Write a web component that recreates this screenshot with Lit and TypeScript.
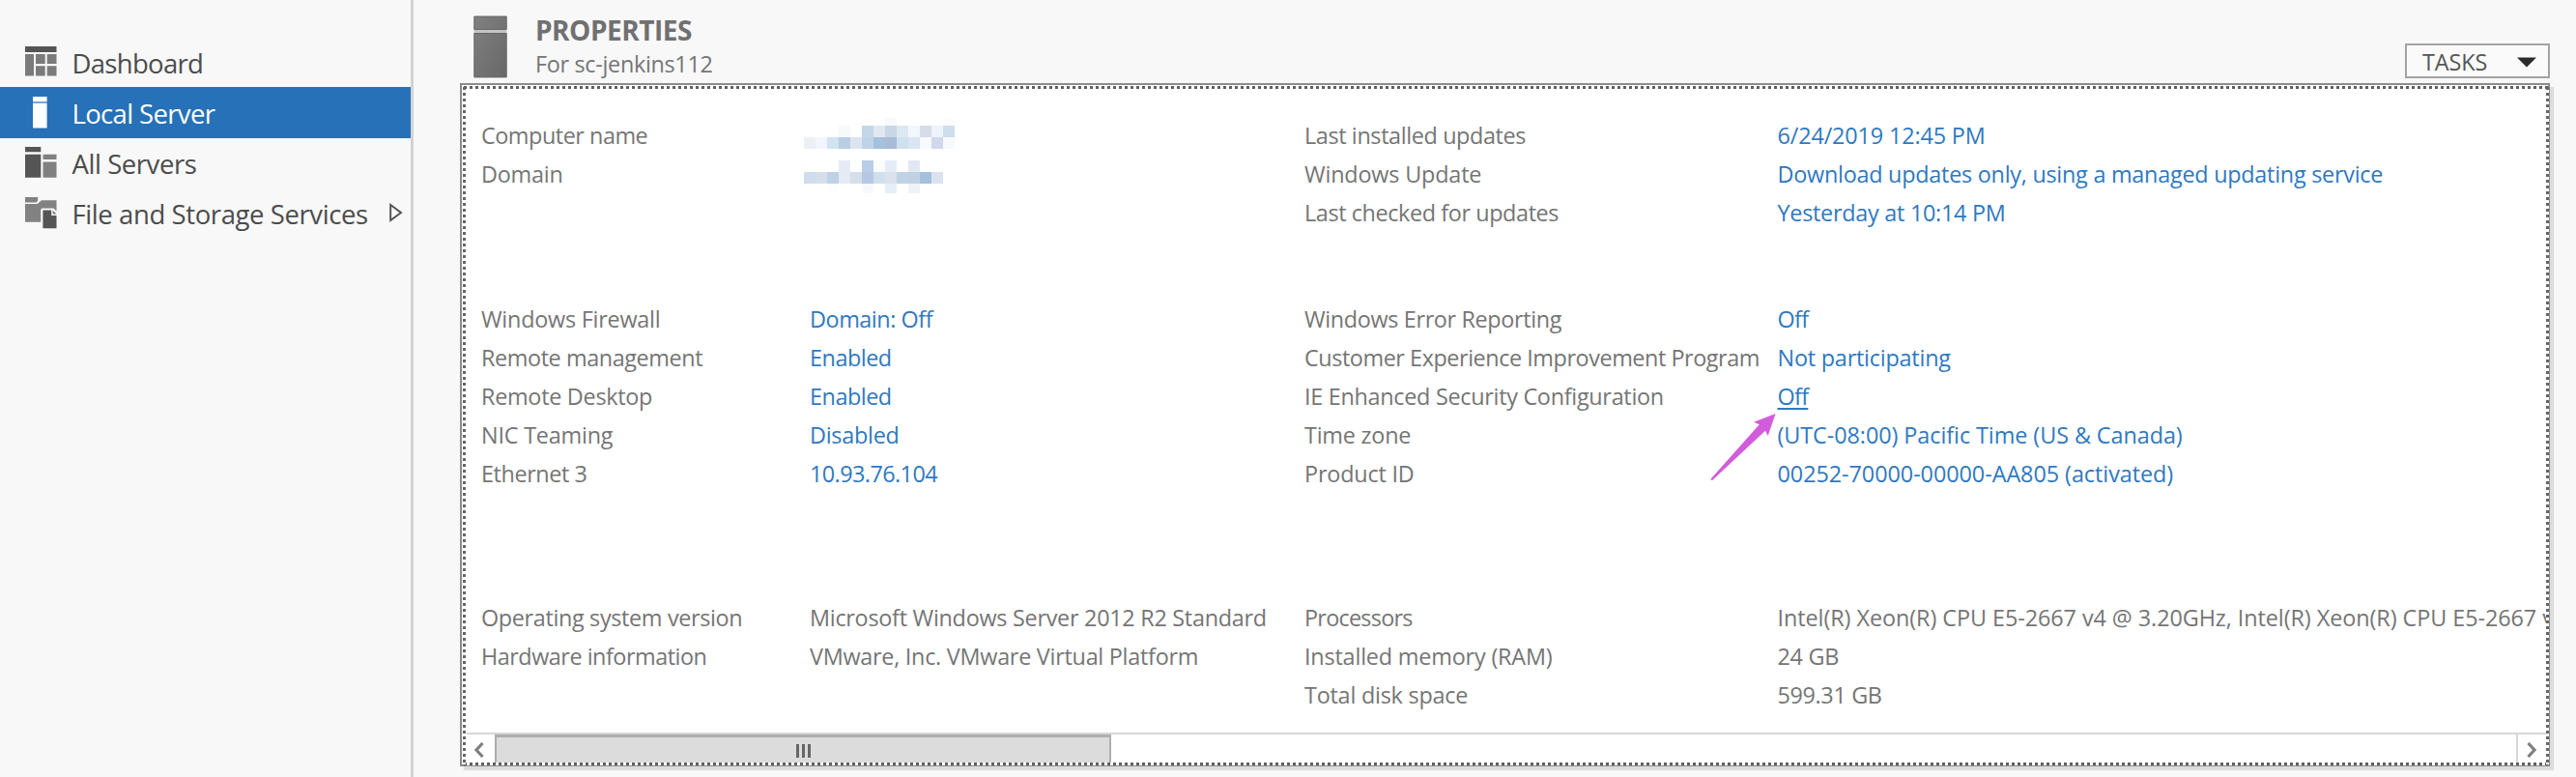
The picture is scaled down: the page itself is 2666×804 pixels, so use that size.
import { LitElement, html, css, svg, nothing } from "lit";
import { customElement, property } from "lit/decorators.js";
import { classMap } from "lit/directives/class-map.js";

/** A single line of text whose tracking is adjusted so it ends at a given width. */
@customElement("fit-text")
class FitText extends LitElement {
  @property() text = "";
  @property({ type: Number }) width = 0;
  static styles = css`
    :host { display: inline-block; white-space: pre; }
  `;
  render() {
    return html`<span>${this.text}</span>`;
  }
  updated() {
    const cs = getComputedStyle(this);
    const ctx = document.createElement("canvas").getContext("2d")!;
    ctx.font = `${cs.fontWeight} ${cs.fontSize} ${cs.fontFamily}`;
    const ink = ctx.measureText(this.text).actualBoundingBoxRight;
    const gap = (this.width - ink) / Math.max(1, this.text.length - 1);
    this.style.letterSpacing = `${gap.toFixed(3)}px`;
  }
}

type Pair = { label: string; lw: number; value?: string; vw?: number; kind?: string; tail?: string };

const left: Pair[][] = [
  [
    { label: "Computer name", lw: 172.8, kind: "masked" },
    { label: "Domain", lw: 84.6, kind: "masked" },
  ],
  [
    { label: "Windows Firewall", lw: 185, value: "Domain: Off", vw: 130, kind: "link" },
    { label: "Remote management", lw: 230.4, value: "Enabled", vw: 85, kind: "link" },
    { label: "Remote Desktop", lw: 178.3, value: "Enabled", vw: 85, kind: "link" },
    { label: "NIC Teaming", lw: 138, value: "Disabled", vw: 92.8, kind: "link" },
    { label: "Ethernet 3", lw: 109.7, value: "10.93.76.104", vw: 133.4, kind: "link" },
  ],
  [
    { label: "Operating system version", lw: 270.5, value: "Microsoft Windows Server 2012 R2 Standard", vw: 473 },
    { label: "Hardware information", lw: 233.8, value: "VMware, Inc. VMware Virtual Platform", vw: 402 },
  ],
];

const right: Pair[][] = [
  [
    { label: "Last installed updates", lw: 230.5, value: "6/24/2019 12:45 PM", vw: 214.5, kind: "link" },
    { label: "Windows Update", lw: 183.5, value: "Download updates only, using a managed updating service", vw: 627, kind: "link" },
    { label: "Last checked for updates", lw: 264.5, value: "Yesterday at 10:14 PM", vw: 235.5, kind: "link" },
  ],
  [
    { label: "Windows Error Reporting", lw: 268, value: "Off", vw: 35, kind: "link" },
    { label: "Customer Experience Improvement Program", lw: 471, value: "Not participating", vw: 181, kind: "link" },
    { label: "IE Enhanced Security Configuration", lw: 372, value: "Off", vw: 35, kind: "link hover" },
    { label: "Time zone", lw: 110.5, value: "(UTC-08:00) Pacific Time (US & Canada)", vw: 419.5, kind: "link" },
    { label: "Product ID", lw: 114, value: "00252-70000-00000-AA805 (activated)", vw: 410, kind: "link" },
  ],
  [
    { label: "Processors", lw: 113.5, value: "Intel(R) Xeon(R) CPU E5-2667 v4 @ 3.20GHz, Intel(R) Xeon(R) CPU E5-2667", vw: 786.5, tail: " v4 @ 3.20GHz" },
    { label: "Installed memory (RAM)", lw: 257, value: "24 GB", vw: 64 },
    { label: "Total disk space", lw: 169.5, value: "599.31 GB", vw: 108.5 },
  ],
];

// Blurred-out value cells: [column, y, height, colour]
const mosaic: [number, number, number, string][] = [
  [5, 0, 8, "#fdfdfd"], [7, 0, 8, "#f7f9fc"], [12, 0, 8, "#fafcfe"],
  [3, 8, 12, "#f8f9fb"], [5, 8, 12, "#c3d7e8"], [6, 8, 12, "#e1e8f2"], [7, 8, 12, "#c9d6e6"], [8, 8, 12, "#dce8f0"],
  [9, 8, 12, "#f2f7fa"], [10, 8, 12, "#d7dcea"], [11, 8, 12, "#eef4fd"], [12, 8, 12, "#cddeed"],
  [0, 20, 12, "#ecf0f5"], [1, 20, 12, "#f0f6fb"], [2, 20, 12, "#d2e3f2"], [3, 20, 12, "#b8cee3"], [4, 20, 12, "#dce4f0"],
  [5, 20, 12, "#bfd3e8"], [6, 20, 12, "#a5c1e0"], [7, 20, 12, "#a8bbd7"], [8, 20, 12, "#cfe0ee"], [9, 20, 12, "#d8e6f2"],
  [10, 20, 12, "#f9fafd"], [11, 20, 12, "#ced9eb"], [12, 20, 12, "#f6faff"],
  [3, 44, 12, "#e4ebf4"], [5, 44, 12, "#bacde6"], [6, 44, 12, "#fafcfe"], [7, 44, 12, "#e4edf6"], [9, 44, 12, "#e2e8f3"],
  [0, 56, 12, "#cfdced"], [1, 56, 12, "#d5dfeb"], [2, 56, 12, "#bfd1e4"], [3, 56, 12, "#e4ebf4"], [4, 56, 12, "#d4dfeb"],
  [5, 56, 12, "#b5c8e3"], [6, 56, 12, "#d0dfed"], [7, 56, 12, "#dbe1ed"], [8, 56, 12, "#bfd3e4"], [9, 56, 12, "#c2d0e3"],
  [10, 56, 12, "#a4c0dc"], [11, 56, 12, "#dbe2ef"],
  [2, 68, 10, "#fcfdff"], [5, 68, 10, "#f7f9fe"], [7, 68, 10, "#e6eff8"], [9, 68, 10, "#eef2f8"],
];

const icons = {
  dashboard: svg`<path fill="#555" d="M0 0h32.5v6H0z"/><path fill="#7b7b7b" d="M0 8h9v22.5H0zM11 8h9.7v10H11zM22.7 8h9.8v10h-9.8zM11 20.3h9.7v10.2H11zM22.7 20.3h9.8v10.2h-9.8z"/>`,
  local: svg`<path fill="#fff" d="M8 0h14.6v5H8zM8 6.8h14.6v25.7H8z"/><path fill="#a9cbea" d="M8 5h14.6v1.8H8z" opacity=".55"/>`,
  servers: svg`<path fill="#555" d="M0 0h16.3v5.3H0zM0 7.7h16.3v24H0z"/><path fill="#808080" d="M18.5 7.7h14v5.3h-14zM18.5 15.5h14v16.2h-14z"/>`,
  storage: svg`<path fill="#828282" d="M0 0h13.2v3.6l-1.6 2H0zM0 7h12.6l4.400-3.700h15.500v11.200l-3-3H17.5l-1.300 1.200v13H0z"/><path fill="#555" d="M18.4 13.500h8.800v5.400h5.300v13.300H18.4z"/><path fill="#777" d="M28.700 13.800l3.800 3.800h-3.800z"/>`,
};

@customElement("side-nav")
class SideNav extends LitElement {
  static styles = css`
    :host { display: block; box-sizing: border-box; width: 428px; border-right: 3px solid #d2d2d2; padding-top: 38px; font-size: 27.5px; color: #4c4c4c; }
    .item { display: flex; height: 52px; padding-left: 26px; }
    .item.selected { background: #2671b7; color: #fff; height: 53px; margin-bottom: -1px; }
    .icon { width: 33px; height: 33px; margin: 10.3px 15.5px 0 0; flex: none; }
    fit-text { line-height: 56px; height: 52px; }
    .more { width: 14px; height: 20px; margin: 16px 0 0 auto; padding-right: 8.5px; flex: none; }
  `;
  render() {
    const items = [
      ["Dashboard", icons.dashboard, 134.5],
      ["Local Server", icons.local, 148.2],
      ["All Servers", icons.servers, 128.2],
      ["File and Storage Services", icons.storage, 305.5],
    ] as const;
    return items.map(([label, icon, w], i) => html`
      <div class=${classMap({ item: true, selected: i === 1 })}>
        <svg class="icon" viewBox="0 0 33 33">${icon}</svg>
        <fit-text .text=${label} .width=${w}></fit-text>
        ${i === 3 ? html`<svg class="more" viewBox="0 0 14 20"><path d="M1.2 2v16L12 10z" fill="#fff" stroke="#555" stroke-width="2"/></svg>` : nothing}
      </div>`);
  }
}

@customElement("property-block")
class PropertyBlock extends LitElement {
  @property({ attribute: false }) rows: Pair[] = [];
  static styles = css`
    :host { display: block; }
    .row { display: grid; grid-template-columns: var(--label) 1fr; height: 40px; line-height: 40px; white-space: nowrap; }
    .value { display: block; }
    .link { color: #2f79bf; }
    .hover fit-text { text-decoration: underline; text-decoration-thickness: 2px; text-underline-offset: 3px; height: 40px; }
  `;
  render() {
    return this.rows.map((r) => html`
      <div class="row">
        <fit-text .text=${r.label} .width=${r.lw - 1.2}></fit-text>
        <span class="value ${r.kind ?? ""}">${r.value
          ? html`<fit-text .text=${r.value} .width=${(r.vw ?? 0) - 1.2}></fit-text>${r.tail ?? nothing}`
          : nothing}</span>
      </div>`);
  }
}

@customElement("scroll-bar")
class ScrollBar extends LitElement {
  static styles = css`
    :host { display: flex; height: 31px; border-top: 2px solid #d6d6d6; background: #fff; }
    .btn { width: 29px; box-sizing: border-box; display: flex; align-items: center; justify-content: center; flex: none; }
    .prev { padding-right: 4px; }
    .next { width: 32px; border-left: 2px solid #d6d6d6; margin-left: auto; padding-right: 1px; }
    .chev { width: 11px; height: 16px; fill: none; stroke: #808080; stroke-width: 3.2; }
    .thumb { width: 638px; box-sizing: border-box; background: #dcdcdc; border: 2px solid #adadad; border-top-width: 3px; border-bottom: 0; display: flex; gap: 3px; justify-content: center; padding-top: 7px; }
    .grip { width: 3px; height: 14px; background: #666; }
  `;
  render() {
    return html`
      <div class="btn prev"><svg class="chev" viewBox="0 0 11 16"><path d="M9.5 1L3 8l6.500 7"/></svg></div>
      <div class="thumb"><i class="grip"></i><i class="grip"></i><i class="grip"></i></div>
      <div class="btn next"><svg class="chev" viewBox="0 0 11 16"><path d="M1.500 1L8 8l-6.500 7"/></svg></div>`;
  }
}

@customElement("app-root")
class AppRoot extends LitElement {
  static styles = css`
    :host { display: flex; width: 2666px; height: 804px; overflow: hidden; position: relative; background: #f8f8f8; font-family: "Open Sans", "Noto Sans", sans-serif; font-size: 23.4px; color: #757575; }
    .main { flex: 1; padding-left: 48px; }
    .head { display: flex; height: 86px; padding-right: 27px; }
    .server { width: 36px; height: 66px; margin: 16px 0 0 14px; }
    .titles { display: flex; flex-direction: column; padding: 12px 0 0 28px; }
    .title { font-size: 28px; font-weight: 700; line-height: 38px; height: 38px; color: #707070; }
    .sub { line-height: 32px; }
    .tasks { margin: 45px 0 0 auto; box-sizing: border-box; width: 150px; height: 36px; border: 2px solid #a3a3a3; display: flex; padding: 0 12px 0 16px; color: #555; line-height: 34px; background: #fafafa; }
    .caret { width: 20px; height: 11px; margin: 12px 0 0 auto; }
    .panel { position: relative; width: 2163px; height: 707px; box-sizing: border-box; background: #fff; border: 2px solid #8c8c8c; box-shadow: 4px 4px 1px #dcdcdc; display: flex; flex-direction: column; }
    .body { flex: 1; display: grid; grid-template-columns: 852px 1fr; padding-left: 20px; margin-right: 1px; overflow: hidden; min-height: 0; }
    .left { --label: 340px; }
    .right { --label: 489.500px; }
    .column { display: flex; flex-direction: column; padding-top: 32px; min-width: 0; }
    .b0 { height: 190px; }
    .b1 { height: 309px; }
    .bar { margin: 0 1px 0 5px; }
    .dots { position: absolute; pointer-events: none; }
    .h { left: 2px; right: 0; height: 3px; background: repeating-linear-gradient(90deg, #606060 0 3px, #fff 3px 6px); }
    .v { top: 2px; bottom: 0; width: 3px; background: repeating-linear-gradient(180deg, #666 0 3px, #fff 3px 6px); }
    .t { top: 1px; }
    .b { bottom: -1px; }
    .l { left: 1px; }
    .r { right: -1px; }
    .overlay { position: absolute; left: 0; top: 0; width: 2666px; height: 804px; pointer-events: none; }
  `;
  render() {
    return html`
      <side-nav></side-nav>
      <div class="main">
        <div class="head">
          <svg class="server" viewBox="0 0 36 66">
            <defs><linearGradient id="g" x1="0" y1="0" x2="1" y2="1"><stop offset="0" stop-color="#808080"/><stop offset="1" stop-color="#686868"/></linearGradient></defs>
            <path fill="#c4c4c4" d="M.5 14h34v6H.5z"/>
            <path fill="url(#g)" stroke="#666" d="M.8 1h33.400v13.400H.8zM.8 18.500h33.400v45.400H.8z"/>
          </svg>
          <div class="titles">
            <fit-text class="title" .text=${"PROPERTIES"} .width=${162}></fit-text>
            <fit-text class="sub" .text=${"For sc-jenkins112"} .width=${183.5}></fit-text>
          </div>
          <div class="tasks">
            <fit-text .text=${"TASKS"} .width=${66.5}></fit-text>
            <svg class="caret" viewBox="0 0 20 11"><path fill="#2b2b2b" d="M0 .5h20L10 10.500z"/></svg>
          </div>
        </div>
        <div class="panel">
          <div class="body">
            ${[left, right].map((col, c) => html`
              <div class="column ${c ? "right" : "left"}">
                ${col.map((rows, i) => html`<property-block class="b${i}" .rows=${rows}></property-block>`)}
              </div>`)}
          </div>
          <scroll-bar class="bar"></scroll-bar>
          <i class="dots h t"></i><i class="dots h b"></i><i class="dots v l"></i><i class="dots v r"></i>
        </div>
      </div>
      <svg class="overlay" viewBox="0 0 2666 804">
        ${mosaic.map(([c, y, h, fill]) => svg`<rect x=${832 + c * 12} y=${122 + y} width="12" height=${h} fill=${fill} shape-rendering="crispEdges"/>`)}
        <path fill="#d25cdb" d="M1837.600 428L1815 436.700l5.800 2.600L1770.600 495.600q0 1.800 1.600 1.400L1827 445.700l2.700 5.300z"/>
      </svg>`;
  }
}
